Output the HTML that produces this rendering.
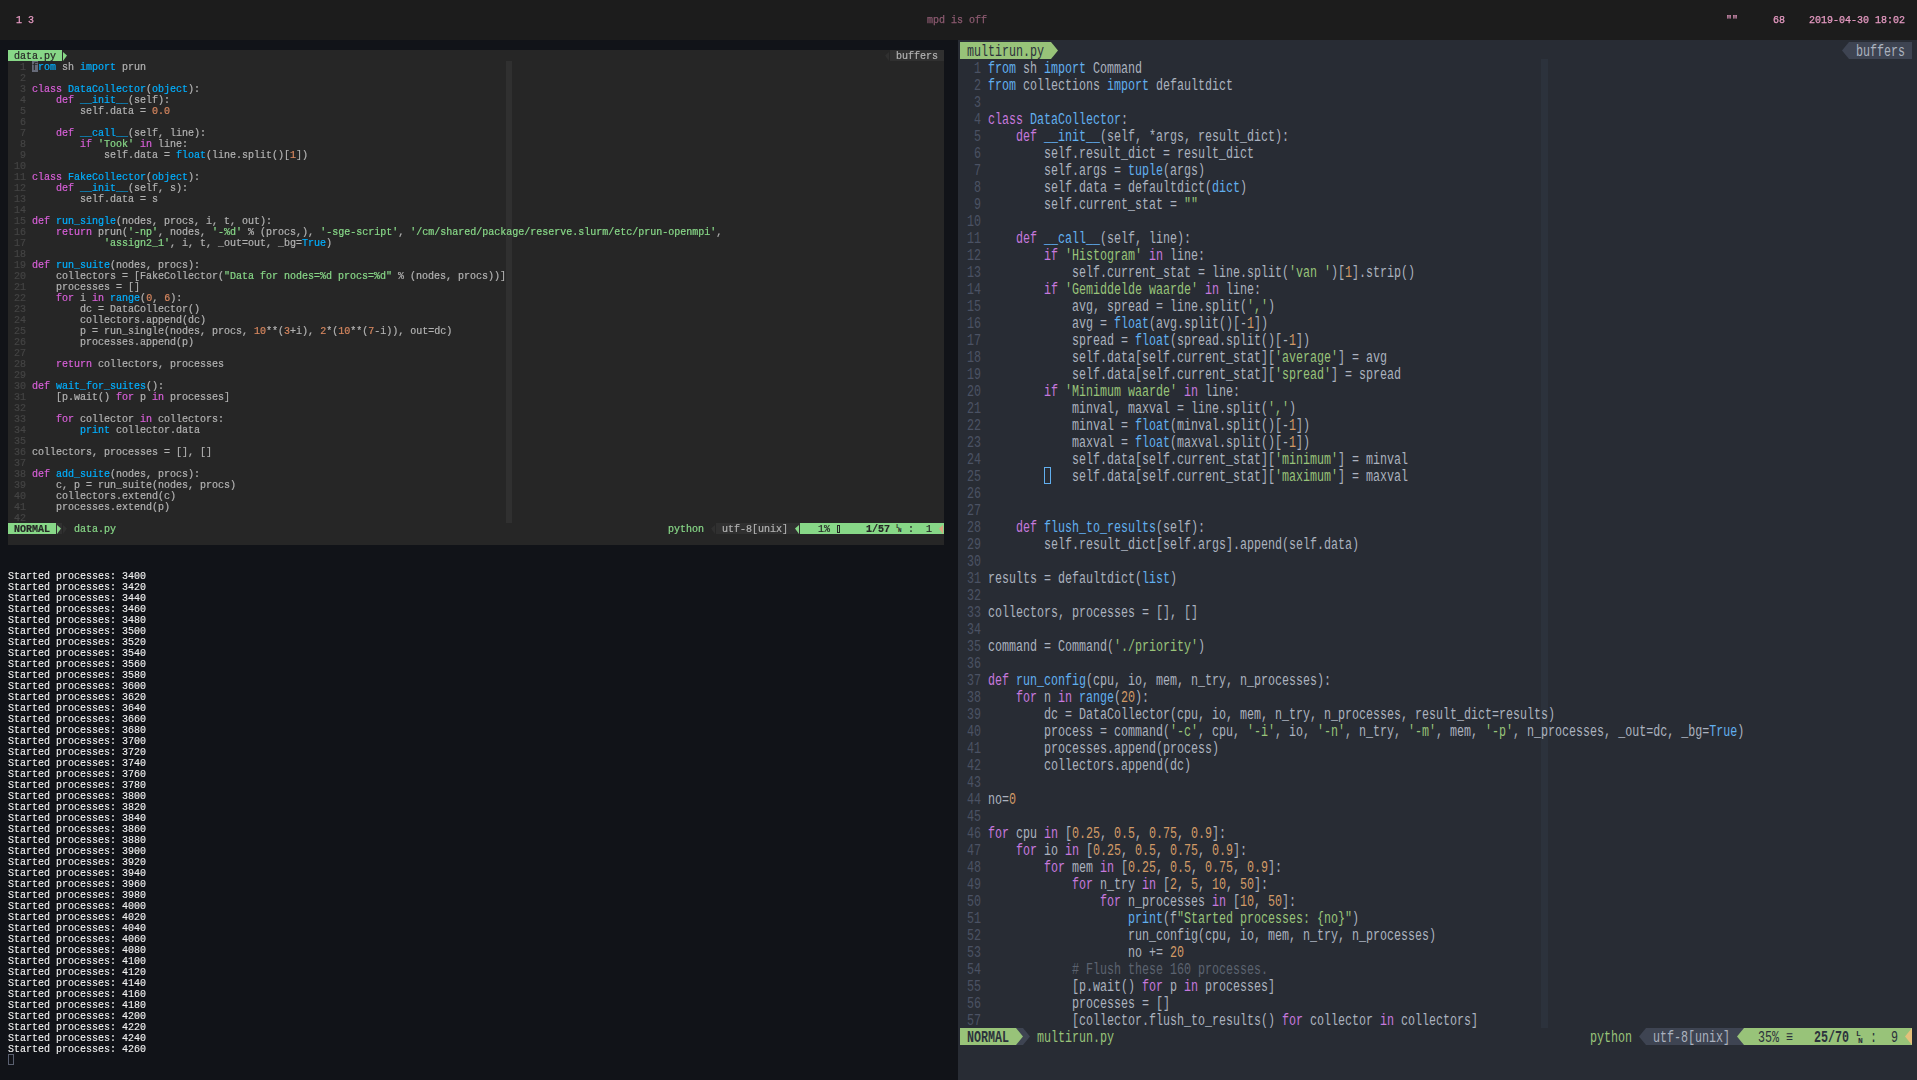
<!DOCTYPE html>
<html><head><meta charset="utf-8"><title>desktop</title>
<style>
html,body{margin:0;padding:0}
body{width:1917px;height:1080px;overflow:hidden;background:#111318;position:relative;font-family:"Liberation Mono","DejaVu Sans Mono",monospace}
i{font-style:normal}
.abs,.r,.rr,.bx{position:absolute}
.bar{left:0;top:0;width:1917px;height:40px;background:#1c1c1c}
.t{position:absolute;font-size:10px;line-height:11px;white-space:pre;will-change:transform;-webkit-text-stroke:0.25px}
.lw{left:8px;top:50px;width:936px;height:495px;background:#262626;color:#b2b2b2;overflow:hidden}
.r{left:0;height:11px;font-size:10px;line-height:11px;white-space:pre;-webkit-text-stroke:0.2px}
.term .r{-webkit-text-stroke:0.1px}
.lw .k{color:#d75fd7}.lw .b{color:#00afff}.lw .s{color:#87d787}.lw .n{color:#d7875f}.lw .c{color:#5f5f5f}.lw .ln{color:#444}
.term{left:8px;top:570px;width:936px;height:500px;color:#f2f2f2;will-change:transform}
.lt{position:absolute;left:0;top:0;width:936px;height:495px;will-change:transform}
.rw{left:958px;top:40px;width:959px;height:1040px;background:#282c34;color:#abb2bf;overflow:hidden}
.rt{position:absolute;left:2px;top:4px;width:1400px;height:1040px;transform:scaleX(0.72917);transform-origin:0 0}
.rr{left:0;height:17px;font-size:16.00px;line-height:17px;white-space:pre}
.rw .k{color:#c678dd}.rw .b{color:#61afef}.rw .s{color:#98c379}.rw .n{color:#d19a66}.rw .c{color:#5c6370}.rw .ln{color:#4b5263}
svg{position:absolute;overflow:visible}
</style></head><body>

<div class="abs bar"></div>
<div class="t" style="left:16px;top:15px;color:#e79bc3">1 3</div>
<div class="t" style="left:927px;top:15px;color:#8c5a70">mpd is off</div>
<div class="t" style="left:1726px;top:15px;color:#e79bc3">""</div>
<div class="t" style="left:1773px;top:15px;color:#e79bc3">68</div>
<div class="t" style="left:1809px;top:15px;color:#e79bc3">2019-04-30 18:02</div>
<div class="abs lw">
<div class="bx" style="left:498px;top:11px;width:6px;height:462px;background:#303030;"></div>
<div class="bx" style="left:0px;top:0px;width:54px;height:11px;background:#87d787;"></div>
<svg style="left:54px;top:0px" width="6" height="11"><polygon points="1,2 5,5.5 1,11" fill="#87d787"/></svg>
<div class="bx" style="left:882px;top:0px;width:54px;height:11px;background:#303030;"></div>
<svg style="left:876px;top:0px" width="6" height="11"><polygon points="5,2 1,5.5 5,11" fill="#303030"/></svg>
<div class="bx" style="left:24px;top:11px;width:6px;height:11px;background:#666a78;"></div>
<div class="bx" style="left:0px;top:473px;width:48px;height:11px;background:#87d787;"></div>
<div class="bx" style="left:48px;top:473px;width:6px;height:11px;background:#303030;"></div>
<svg style="left:48px;top:473px" width="6" height="11"><polygon points="1,2 5,5.5 1,11" fill="#87d787"/></svg>
<svg style="left:54px;top:473px" width="6" height="11"><polygon points="1,2 5,5.5 1,11" fill="#303030"/></svg>
<svg style="left:702px;top:473px" width="6" height="11"><polygon points="5,2 1,5.5 5,11" fill="#303030"/></svg>
<div class="bx" style="left:708px;top:473px;width:84px;height:11px;background:#303030;"></div>
<svg style="left:786px;top:473px" width="6" height="11"><polygon points="5,2 1,5.5 5,11" fill="#87d787"/></svg>
<div class="bx" style="left:792px;top:473px;width:144px;height:11px;background:#87d787;"></div>
<div class="bx" style="left:829px;top:475px;width:1px;height:6px;border:1px solid #262626"></div>
<div class="bx" style="left:888px;top:474px;width:6px;height:10px;color:#262626;font-size:6px;line-height:6px;font-weight:bold"><span style="position:absolute;left:0;top:0">L</span><span style="position:absolute;left:2px;top:4px">N</span></div>
<svg style="left:930px;top:473px" width="6" height="11"><polygon points="5,2 1,5.5 5,11" fill="#d9a37f"/></svg>
<div class="lt">
<div class="r" style="left:6px;top:1px;color:#262626">data.py</div>
<div class="r" style="left:888px;top:1px;color:#b2b2b2">buffers</div>
<div class="r" style="left:0px;top:12px;"><i class="ln">  1 </i><i style="color:#262626">f</i><i class="b">rom</i> sh <i class="b">import</i> prun</div>
<div class="r" style="left:0px;top:23px;"><i class="ln">  2 </i></div>
<div class="r" style="left:0px;top:34px;"><i class="ln">  3 </i><i class="k">class</i> <i class="b">DataCollector</i>(<i class="b">object</i>):</div>
<div class="r" style="left:0px;top:45px;"><i class="ln">  4 </i>    <i class="k">def</i> <i class="b">__init__</i>(self):</div>
<div class="r" style="left:0px;top:56px;"><i class="ln">  5 </i>        self.data = <i class="n">0.0</i></div>
<div class="r" style="left:0px;top:67px;"><i class="ln">  6 </i></div>
<div class="r" style="left:0px;top:78px;"><i class="ln">  7 </i>    <i class="k">def</i> <i class="b">__call__</i>(self, line):</div>
<div class="r" style="left:0px;top:89px;"><i class="ln">  8 </i>        <i class="k">if</i> <i class="s">'Took'</i> <i class="k">in</i> line:</div>
<div class="r" style="left:0px;top:100px;"><i class="ln">  9 </i>            self.data = <i class="b">float</i>(line.split()[<i class="n">1</i>])</div>
<div class="r" style="left:0px;top:111px;"><i class="ln"> 10 </i></div>
<div class="r" style="left:0px;top:122px;"><i class="ln"> 11 </i><i class="k">class</i> <i class="b">FakeCollector</i>(<i class="b">object</i>):</div>
<div class="r" style="left:0px;top:133px;"><i class="ln"> 12 </i>    <i class="k">def</i> <i class="b">__init__</i>(self, s):</div>
<div class="r" style="left:0px;top:144px;"><i class="ln"> 13 </i>        self.data = s</div>
<div class="r" style="left:0px;top:155px;"><i class="ln"> 14 </i></div>
<div class="r" style="left:0px;top:166px;"><i class="ln"> 15 </i><i class="k">def</i> <i class="b">run_single</i>(nodes, procs, i, t, out):</div>
<div class="r" style="left:0px;top:177px;"><i class="ln"> 16 </i>    <i class="k">return</i> prun(<i class="s">'-np'</i>, nodes, <i class="s">'-%d'</i> % (procs,), <i class="s">'-sge-script'</i>, <i class="s">'/cm/shared/package/reserve.slurm/etc/prun-openmpi'</i>,</div>
<div class="r" style="left:0px;top:188px;"><i class="ln"> 17 </i>            <i class="s">'assign2_1'</i>, i, t, _out=out, _bg=<i class="b">True</i>)</div>
<div class="r" style="left:0px;top:199px;"><i class="ln"> 18 </i></div>
<div class="r" style="left:0px;top:210px;"><i class="ln"> 19 </i><i class="k">def</i> <i class="b">run_suite</i>(nodes, procs):</div>
<div class="r" style="left:0px;top:221px;"><i class="ln"> 20 </i>    collectors = [FakeCollector(<i class="s">"Data for nodes=%d procs=%d"</i> % (nodes, procs))]</div>
<div class="r" style="left:0px;top:232px;"><i class="ln"> 21 </i>    processes = []</div>
<div class="r" style="left:0px;top:243px;"><i class="ln"> 22 </i>    <i class="k">for</i> i <i class="k">in</i> <i class="b">range</i>(<i class="n">0</i>, <i class="n">6</i>):</div>
<div class="r" style="left:0px;top:254px;"><i class="ln"> 23 </i>        dc = DataCollector()</div>
<div class="r" style="left:0px;top:265px;"><i class="ln"> 24 </i>        collectors.append(dc)</div>
<div class="r" style="left:0px;top:276px;"><i class="ln"> 25 </i>        p = run_single(nodes, procs, <i class="n">10</i>**(<i class="n">3</i>+i), <i class="n">2</i>*(<i class="n">10</i>**(<i class="n">7</i>-i)), out=dc)</div>
<div class="r" style="left:0px;top:287px;"><i class="ln"> 26 </i>        processes.append(p)</div>
<div class="r" style="left:0px;top:298px;"><i class="ln"> 27 </i></div>
<div class="r" style="left:0px;top:309px;"><i class="ln"> 28 </i>    <i class="k">return</i> collectors, processes</div>
<div class="r" style="left:0px;top:320px;"><i class="ln"> 29 </i></div>
<div class="r" style="left:0px;top:331px;"><i class="ln"> 30 </i><i class="k">def</i> <i class="b">wait_for_suites</i>():</div>
<div class="r" style="left:0px;top:342px;"><i class="ln"> 31 </i>    [p.wait() <i class="k">for</i> p <i class="k">in</i> processes]</div>
<div class="r" style="left:0px;top:353px;"><i class="ln"> 32 </i></div>
<div class="r" style="left:0px;top:364px;"><i class="ln"> 33 </i>    <i class="k">for</i> collector <i class="k">in</i> collectors:</div>
<div class="r" style="left:0px;top:375px;"><i class="ln"> 34 </i>        <i class="b">print</i> collector.data</div>
<div class="r" style="left:0px;top:386px;"><i class="ln"> 35 </i></div>
<div class="r" style="left:0px;top:397px;"><i class="ln"> 36 </i>collectors, processes = [], []</div>
<div class="r" style="left:0px;top:408px;"><i class="ln"> 37 </i></div>
<div class="r" style="left:0px;top:419px;"><i class="ln"> 38 </i><i class="k">def</i> <i class="b">add_suite</i>(nodes, procs):</div>
<div class="r" style="left:0px;top:430px;"><i class="ln"> 39 </i>    c, p = run_suite(nodes, procs)</div>
<div class="r" style="left:0px;top:441px;"><i class="ln"> 40 </i>    collectors.extend(c)</div>
<div class="r" style="left:0px;top:452px;"><i class="ln"> 41 </i>    processes.extend(p)</div>
<div class="r" style="left:0px;top:463px;"><i class="ln"> 42 </i></div>
<div class="r" style="left:6px;top:474px;color:#262626"><b>NORMAL</b></div>
<div class="r" style="left:66px;top:474px;color:#87d787">data.py</div>
<div class="r" style="left:660px;top:474px;color:#87d787">python</div>
<div class="r" style="left:714px;top:474px;color:#b2b2b2">utf-8[unix]</div>
<div class="r" style="left:792px;top:474px;color:#262626">   1%</div>
<div class="r" style="left:840px;top:474px;color:#262626"><b>   1/57</b></div>
<div class="r" style="left:900px;top:474px;color:#262626">:  1</div>
</div>
</div>
<div class="abs term">
<div class="r" style="top:1px">Started processes: 3400</div>
<div class="r" style="top:12px">Started processes: 3420</div>
<div class="r" style="top:23px">Started processes: 3440</div>
<div class="r" style="top:34px">Started processes: 3460</div>
<div class="r" style="top:45px">Started processes: 3480</div>
<div class="r" style="top:56px">Started processes: 3500</div>
<div class="r" style="top:67px">Started processes: 3520</div>
<div class="r" style="top:78px">Started processes: 3540</div>
<div class="r" style="top:89px">Started processes: 3560</div>
<div class="r" style="top:100px">Started processes: 3580</div>
<div class="r" style="top:111px">Started processes: 3600</div>
<div class="r" style="top:122px">Started processes: 3620</div>
<div class="r" style="top:133px">Started processes: 3640</div>
<div class="r" style="top:144px">Started processes: 3660</div>
<div class="r" style="top:155px">Started processes: 3680</div>
<div class="r" style="top:166px">Started processes: 3700</div>
<div class="r" style="top:177px">Started processes: 3720</div>
<div class="r" style="top:188px">Started processes: 3740</div>
<div class="r" style="top:199px">Started processes: 3760</div>
<div class="r" style="top:210px">Started processes: 3780</div>
<div class="r" style="top:221px">Started processes: 3800</div>
<div class="r" style="top:232px">Started processes: 3820</div>
<div class="r" style="top:243px">Started processes: 3840</div>
<div class="r" style="top:254px">Started processes: 3860</div>
<div class="r" style="top:265px">Started processes: 3880</div>
<div class="r" style="top:276px">Started processes: 3900</div>
<div class="r" style="top:287px">Started processes: 3920</div>
<div class="r" style="top:298px">Started processes: 3940</div>
<div class="r" style="top:309px">Started processes: 3960</div>
<div class="r" style="top:320px">Started processes: 3980</div>
<div class="r" style="top:331px">Started processes: 4000</div>
<div class="r" style="top:342px">Started processes: 4020</div>
<div class="r" style="top:353px">Started processes: 4040</div>
<div class="r" style="top:364px">Started processes: 4060</div>
<div class="r" style="top:375px">Started processes: 4080</div>
<div class="r" style="top:386px">Started processes: 4100</div>
<div class="r" style="top:397px">Started processes: 4120</div>
<div class="r" style="top:408px">Started processes: 4140</div>
<div class="r" style="top:419px">Started processes: 4160</div>
<div class="r" style="top:430px">Started processes: 4180</div>
<div class="r" style="top:441px">Started processes: 4200</div>
<div class="r" style="top:452px">Started processes: 4220</div>
<div class="r" style="top:463px">Started processes: 4240</div>
<div class="r" style="top:474px">Started processes: 4260</div>
<div class="bx" style="left:0;top:484px;width:4px;height:9px;border:1px solid #5a6070"></div>
</div>
<div class="abs rw">
<div class="bx" style="left:583px;top:19px;width:7px;height:969px;background:#2c323c"></div>
<div class="bx" style="left:2px;top:2px;width:91px;height:17px;background:#98c379"></div>
<svg style="left:93px;top:2px" width="7" height="17"><polygon points="0,0 7,8.5 0,17" fill="#98c379"/></svg>
<div class="bx" style="left:891px;top:2px;width:63px;height:17px;background:#3e4452"></div>
<svg style="left:884px;top:2px" width="7" height="17"><polygon points="7,0 0,8.5 7,17" fill="#3e4452"/></svg>
<div class="bx" style="left:86px;top:427px;width:7px;height:17px;border:1px solid #61afef;box-sizing:border-box"></div>
<div class="bx" style="left:2px;top:988px;width:56px;height:17px;background:#98c379"></div>
<div class="bx" style="left:58px;top:988px;width:7px;height:17px;background:#3e4452"></div>
<svg style="left:58px;top:988px" width="7" height="17"><polygon points="0,0 7,8.5 0,17" fill="#98c379"/></svg>
<svg style="left:65px;top:988px" width="7" height="17"><polygon points="0,0 7,8.5 0,17" fill="#3e4452"/></svg>
<svg style="left:681px;top:988px" width="7" height="17"><polygon points="7,0 0,8.5 7,17" fill="#3e4452"/></svg>
<div class="bx" style="left:688px;top:988px;width:98px;height:17px;background:#3e4452"></div>
<svg style="left:779px;top:988px" width="7" height="17"><polygon points="7,0 0,8.5 7,17" fill="#98c379"/></svg>
<div class="bx" style="left:786px;top:988px;width:168px;height:17px;background:#98c379"></div>
<div class="bx" style="left:898px;top:990px;width:7px;height:15px;color:#2c323c;font-size:8px;line-height:8px;font-weight:bold"><span style="position:absolute;left:0;top:0">L</span><span style="position:absolute;left:2px;top:7px">N</span></div>
<svg style="left:947px;top:988px" width="7" height="17"><polygon points="7,0 0,8.5 7,17" fill="#e5c07b"/></svg>
<div class="rt">
<div class="rr" style="left:9.60px;top:0px;color:#2c323c">multirun.py</div>
<div class="rr" style="left:1228.80px;top:0px;color:#abb2bf">buffers</div>
<div class="rr" style="left:0.00px;top:17px;"><i class="ln">  1 </i><i class="b">from</i> sh <i class="b">import</i> Command</div>
<div class="rr" style="left:0.00px;top:34px;"><i class="ln">  2 </i><i class="b">from</i> collections <i class="b">import</i> defaultdict</div>
<div class="rr" style="left:0.00px;top:51px;"><i class="ln">  3 </i></div>
<div class="rr" style="left:0.00px;top:68px;"><i class="ln">  4 </i><i class="k">class</i> <i class="b">DataCollector</i>:</div>
<div class="rr" style="left:0.00px;top:85px;"><i class="ln">  5 </i>    <i class="k">def</i> <i class="b">__init__</i>(self, *args, result_dict):</div>
<div class="rr" style="left:0.00px;top:102px;"><i class="ln">  6 </i>        self.result_dict = result_dict</div>
<div class="rr" style="left:0.00px;top:119px;"><i class="ln">  7 </i>        self.args = <i class="b">tuple</i>(args)</div>
<div class="rr" style="left:0.00px;top:136px;"><i class="ln">  8 </i>        self.data = defaultdict(<i class="b">dict</i>)</div>
<div class="rr" style="left:0.00px;top:153px;"><i class="ln">  9 </i>        self.current_stat = <i class="s">""</i></div>
<div class="rr" style="left:0.00px;top:170px;"><i class="ln"> 10 </i></div>
<div class="rr" style="left:0.00px;top:187px;"><i class="ln"> 11 </i>    <i class="k">def</i> <i class="b">__call__</i>(self, line):</div>
<div class="rr" style="left:0.00px;top:204px;"><i class="ln"> 12 </i>        <i class="k">if</i> <i class="s">'Histogram'</i> <i class="k">in</i> line:</div>
<div class="rr" style="left:0.00px;top:221px;"><i class="ln"> 13 </i>            self.current_stat = line.split(<i class="s">'van '</i>)[<i class="n">1</i>].strip()</div>
<div class="rr" style="left:0.00px;top:238px;"><i class="ln"> 14 </i>        <i class="k">if</i> <i class="s">'Gemiddelde waarde'</i> <i class="k">in</i> line:</div>
<div class="rr" style="left:0.00px;top:255px;"><i class="ln"> 15 </i>            avg, spread = line.split(<i class="s">','</i>)</div>
<div class="rr" style="left:0.00px;top:272px;"><i class="ln"> 16 </i>            avg = <i class="b">float</i>(avg.split()[-<i class="n">1</i>])</div>
<div class="rr" style="left:0.00px;top:289px;"><i class="ln"> 17 </i>            spread = <i class="b">float</i>(spread.split()[-<i class="n">1</i>])</div>
<div class="rr" style="left:0.00px;top:306px;"><i class="ln"> 18 </i>            self.data[self.current_stat][<i class="s">'average'</i>] = avg</div>
<div class="rr" style="left:0.00px;top:323px;"><i class="ln"> 19 </i>            self.data[self.current_stat][<i class="s">'spread'</i>] = spread</div>
<div class="rr" style="left:0.00px;top:340px;"><i class="ln"> 20 </i>        <i class="k">if</i> <i class="s">'Minimum waarde'</i> <i class="k">in</i> line:</div>
<div class="rr" style="left:0.00px;top:357px;"><i class="ln"> 21 </i>            minval, maxval = line.split(<i class="s">','</i>)</div>
<div class="rr" style="left:0.00px;top:374px;"><i class="ln"> 22 </i>            minval = <i class="b">float</i>(minval.split()[-<i class="n">1</i>])</div>
<div class="rr" style="left:0.00px;top:391px;"><i class="ln"> 23 </i>            maxval = <i class="b">float</i>(maxval.split()[-<i class="n">1</i>])</div>
<div class="rr" style="left:0.00px;top:408px;"><i class="ln"> 24 </i>            self.data[self.current_stat][<i class="s">'minimum'</i>] = minval</div>
<div class="rr" style="left:0.00px;top:425px;"><i class="ln"> 25 </i>            self.data[self.current_stat][<i class="s">'maximum'</i>] = maxval</div>
<div class="rr" style="left:0.00px;top:442px;"><i class="ln"> 26 </i></div>
<div class="rr" style="left:0.00px;top:459px;"><i class="ln"> 27 </i></div>
<div class="rr" style="left:0.00px;top:476px;"><i class="ln"> 28 </i>    <i class="k">def</i> <i class="b">flush_to_results</i>(self):</div>
<div class="rr" style="left:0.00px;top:493px;"><i class="ln"> 29 </i>        self.result_dict[self.args].append(self.data)</div>
<div class="rr" style="left:0.00px;top:510px;"><i class="ln"> 30 </i></div>
<div class="rr" style="left:0.00px;top:527px;"><i class="ln"> 31 </i>results = defaultdict(<i class="b">list</i>)</div>
<div class="rr" style="left:0.00px;top:544px;"><i class="ln"> 32 </i></div>
<div class="rr" style="left:0.00px;top:561px;"><i class="ln"> 33 </i>collectors, processes = [], []</div>
<div class="rr" style="left:0.00px;top:578px;"><i class="ln"> 34 </i></div>
<div class="rr" style="left:0.00px;top:595px;"><i class="ln"> 35 </i>command = Command(<i class="s">'./priority'</i>)</div>
<div class="rr" style="left:0.00px;top:612px;"><i class="ln"> 36 </i></div>
<div class="rr" style="left:0.00px;top:629px;"><i class="ln"> 37 </i><i class="k">def</i> <i class="b">run_config</i>(cpu, io, mem, n_try, n_processes):</div>
<div class="rr" style="left:0.00px;top:646px;"><i class="ln"> 38 </i>    <i class="k">for</i> n <i class="k">in</i> <i class="b">range</i>(<i class="n">20</i>):</div>
<div class="rr" style="left:0.00px;top:663px;"><i class="ln"> 39 </i>        dc = DataCollector(cpu, io, mem, n_try, n_processes, result_dict=results)</div>
<div class="rr" style="left:0.00px;top:680px;"><i class="ln"> 40 </i>        process = command(<i class="s">'-c'</i>, cpu, <i class="s">'-i'</i>, io, <i class="s">'-n'</i>, n_try, <i class="s">'-m'</i>, mem, <i class="s">'-p'</i>, n_processes, _out=dc, _bg=<i class="b">True</i>)</div>
<div class="rr" style="left:0.00px;top:697px;"><i class="ln"> 41 </i>        processes.append(process)</div>
<div class="rr" style="left:0.00px;top:714px;"><i class="ln"> 42 </i>        collectors.append(dc)</div>
<div class="rr" style="left:0.00px;top:731px;"><i class="ln"> 43 </i></div>
<div class="rr" style="left:0.00px;top:748px;"><i class="ln"> 44 </i>no=<i class="n">0</i></div>
<div class="rr" style="left:0.00px;top:765px;"><i class="ln"> 45 </i></div>
<div class="rr" style="left:0.00px;top:782px;"><i class="ln"> 46 </i><i class="k">for</i> cpu <i class="k">in</i> [<i class="n">0.25</i>, <i class="n">0.5</i>, <i class="n">0.75</i>, <i class="n">0.9</i>]:</div>
<div class="rr" style="left:0.00px;top:799px;"><i class="ln"> 47 </i>    <i class="k">for</i> io <i class="k">in</i> [<i class="n">0.25</i>, <i class="n">0.5</i>, <i class="n">0.75</i>, <i class="n">0.9</i>]:</div>
<div class="rr" style="left:0.00px;top:816px;"><i class="ln"> 48 </i>        <i class="k">for</i> mem <i class="k">in</i> [<i class="n">0.25</i>, <i class="n">0.5</i>, <i class="n">0.75</i>, <i class="n">0.9</i>]:</div>
<div class="rr" style="left:0.00px;top:833px;"><i class="ln"> 49 </i>            <i class="k">for</i> n_try <i class="k">in</i> [<i class="n">2</i>, <i class="n">5</i>, <i class="n">10</i>, <i class="n">50</i>]:</div>
<div class="rr" style="left:0.00px;top:850px;"><i class="ln"> 50 </i>                <i class="k">for</i> n_processes <i class="k">in</i> [<i class="n">10</i>, <i class="n">50</i>]:</div>
<div class="rr" style="left:0.00px;top:867px;"><i class="ln"> 51 </i>                    <i class="b">print</i>(f<i class="s">"Started processes: {no}"</i>)</div>
<div class="rr" style="left:0.00px;top:884px;"><i class="ln"> 52 </i>                    run_config(cpu, io, mem, n_try, n_processes)</div>
<div class="rr" style="left:0.00px;top:901px;"><i class="ln"> 53 </i>                    no += <i class="n">20</i></div>
<div class="rr" style="left:0.00px;top:918px;"><i class="ln"> 54 </i>            <i class="c"># Flush these 160 processes.</i></div>
<div class="rr" style="left:0.00px;top:935px;"><i class="ln"> 55 </i>            [p.wait() <i class="k">for</i> p <i class="k">in</i> processes]</div>
<div class="rr" style="left:0.00px;top:952px;"><i class="ln"> 56 </i>            processes = []</div>
<div class="rr" style="left:0.00px;top:969px;"><i class="ln"> 57 </i>            [collector.flush_to_results() <i class="k">for</i> collector <i class="k">in</i> collectors]</div>
<div class="rr" style="left:9.60px;top:986px;color:#2c323c;font-weight:bold">NORMAL</div>
<div class="rr" style="left:105.60px;top:986px;color:#98c379">multirun.py</div>
<div class="rr" style="left:864.00px;top:986px;color:#98c379">python</div>
<div class="rr" style="left:950.40px;top:986px;color:#abb2bf">utf-8[unix]</div>
<div class="rr" style="left:1075.20px;top:986px;color:#2c323c">  35% ≡</div>
<div class="rr" style="left:1152.00px;top:986px;color:#2c323c;font-weight:bold">  25/70</div>
<div class="rr" style="left:1248.00px;top:986px;color:#2c323c">:  9</div>
</div>
</div>
</body></html>
